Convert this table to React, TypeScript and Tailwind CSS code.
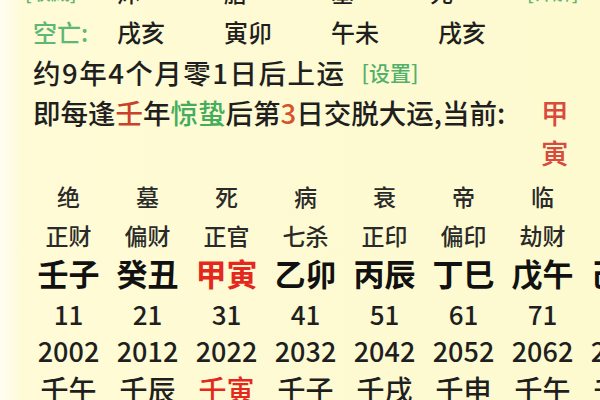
const font = { fontFamily: '"Noto Sans CJK SC", "Noto Sans", sans-serif' };

type Cell = { text: string; red?: boolean };

const changSheng = ["绝", "墓", "死", "病", "衰", "帝", "临", "冠"];
const shiShen = ["正财", "偏财", "正官", "七杀", "正印", "偏印", "劫财", "比肩"];
const daYun: Cell[] = [
  { text: "壬子" },
  { text: "癸丑" },
  { text: "甲寅", red: true },
  { text: "乙卯" },
  { text: "丙辰" },
  { text: "丁巳" },
  { text: "戊午" },
  { text: "己未" },
];
const ages = ["11", "21", "31", "41", "51", "61", "71", "81"];
const years = ["2002", "2012", "2022", "2032", "2042", "2052", "2062", "2072"];
const liuNian: Cell[] = [
  { text: "壬午" },
  { text: "壬辰" },
  { text: "壬寅", red: true },
  { text: "壬子" },
  { text: "壬戌" },
  { text: "壬申" },
  { text: "壬午" },
  { text: "壬辰" },
];

function Row({ items, className }: { items: Cell[]; className: string }) {
  return (
    <div className={`grid grid-cols-[repeat(8,79px)] text-center whitespace-nowrap ${className}`}>
      {items.map((c, i) => (
        <span key={i} className={c.red ? "text-[#e4281d]" : ""}>
          {c.text}
        </span>
      ))}
    </div>
  );
}

const plain = (arr: string[]): Cell[] => arr.map((text) => ({ text }));

export default function App() {
  return (
    <div
      style={font}
      className="w-[600px] h-[400px] overflow-hidden font-medium bg-[linear-gradient(to_right,#fffef2_0px,#fefbd6_22px,#fdfad0_100%)] text-[#1f1f1f]"
    >
      <div className="-mt-[28px] pl-[33px]">
        {/* clipped header row */}
        <div className="grid grid-cols-[84px_107px_107px_107px_107px_80px] h-[40px] leading-[40px] text-[23px] whitespace-nowrap">
          <span className="-ml-[8px] text-[19px] text-[#5cb574]">[收藏]</span>
          <span>沐</span>
          <span>胎</span>
          <span>墓</span>
          <span className="-ml-[8px]">死</span>
          <span className="-ml-[18px] text-[19px] text-[#5cb574]">[详解]</span>
        </div>

        <div className="grid grid-cols-[84px_107px_107px_107px_107px] h-[40px] leading-[40px] text-[24px] whitespace-nowrap">
          <span className="text-[#5cb874]">空亡:</span>
          <span>戌亥</span>
          <span>寅卯</span>
          <span>午未</span>
          <span>戌亥</span>
        </div>

        <div className="flex items-center h-[40px] leading-[40px] whitespace-nowrap">
          <span className="text-[27.5px] tracking-[1.5px]">约9年4个月零1日后上运</span>
          <span className="ml-[16px] text-[21px] text-[#52b06a]">[设置]</span>
        </div>

        <div className="flex whitespace-nowrap text-[27.5px] leading-[40px]">
          <span>
            即每逢<span className="text-[#c9412a]">壬</span>年<span className="text-[#44ad5c]">惊蛰</span>后第
            <span className="text-[#d6542c]">3</span>日交脱大运,当前:
          </span>
          <span className="ml-[36px] flex w-[28px] flex-col text-[#d8493e]">
            <span>甲</span>
            <span>寅</span>
          </span>
        </div>
      </div>

      <div className="pl-[29px] mt-[4px]">
        <Row items={plain(changSheng)} className="h-[40px] leading-[40px] text-[23px] text-[#2a2a2a]" />
        <Row items={plain(shiShen)} className="h-[38px] leading-[38px] text-[23px] text-[#2a2a2a]" />
        <Row items={daYun} className="h-[38px] leading-[38px] text-[31px] font-bold text-[#111]" />
        <Row items={plain(ages)} className="h-[44px] leading-[44px] text-[26px]" />
        <Row items={plain(years)} className="h-[30px] leading-[30px] text-[27px]" />
        <Row items={liuNian} className="h-[46px] leading-[46px] text-[28px]" />
      </div>
    </div>
  );
}
